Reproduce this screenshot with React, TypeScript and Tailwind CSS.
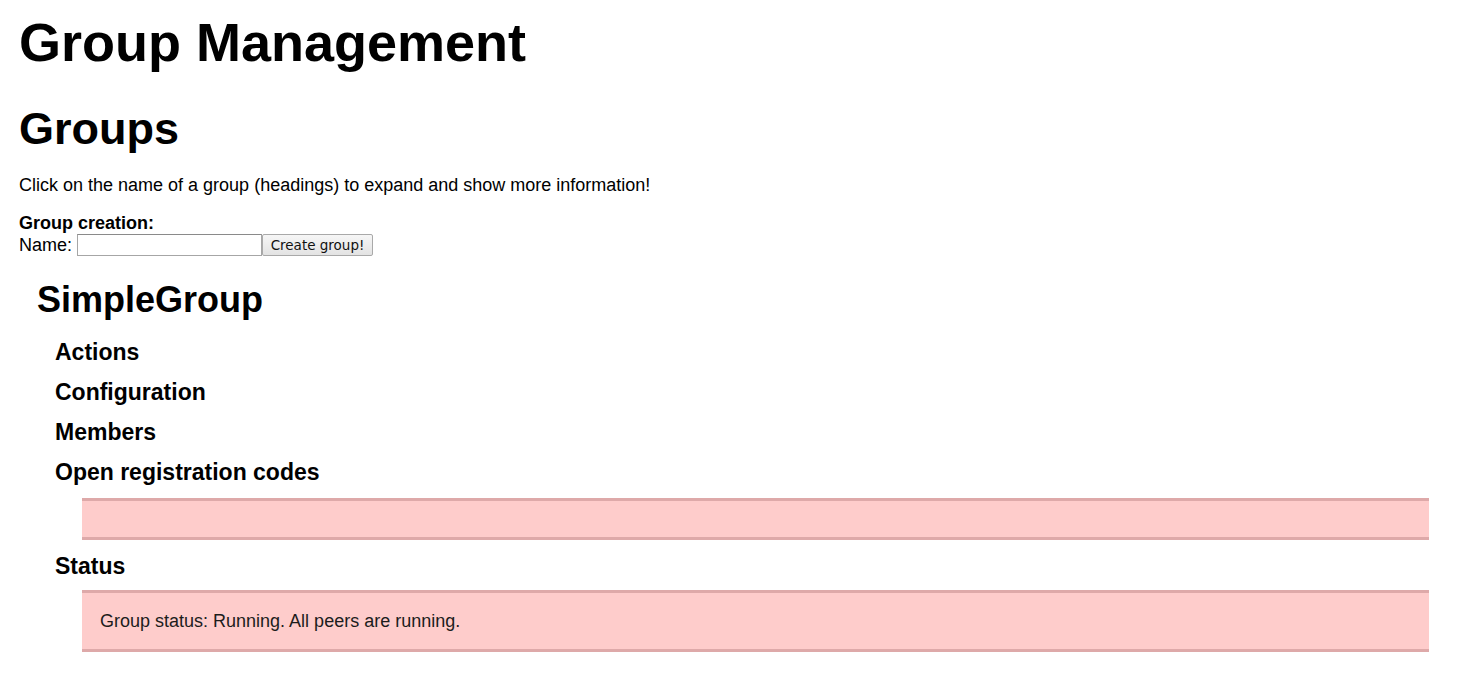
import React, { useState } from 'react';

const Section: React.FC<{ title: string; className?: string; children?: React.ReactNode }> = ({ title, className = '', children }) => (
  <div className={className}>
    <h4 className="pl-[36px] text-[23px] leading-[26px] font-bold cursor-pointer">{title}</h4>
    {children}
  </div>
);

// pink info box
const InfoBox: React.FC<{ className?: string; children?: React.ReactNode }> = ({ className = '', children }) => (
  <div
    className={`ml-[63px] mr-[10px] border-y-[3px] border-[#dea9a9] bg-[#fecccb] pl-[18px] pt-[18px] pb-[17px] min-h-[42px] text-[18px] leading-[21px] text-[#1c1c1c] ${className}`}
  >
    {children}
  </div>
);

export default function App() {
  const [name, setName] = useState('');

  return (
    <div className="px-[19px] pt-[11px] pb-[30px] text-black bg-white" style={{ fontFamily: '"Liberation Sans", Arial, sans-serif' }}>
      <h1 className="text-[54px] leading-[62px] font-bold">Group Management</h1>
      <h2 className="mt-[30px] text-[45px] leading-[51px] font-bold">Groups</h2>
      <p className="mt-[21px] text-[18px] leading-[21px]">
        Click on the name of a group (headings) to expand and show more information!
      </p>

      {/* group creation form */}
      <div className="mt-[17px] text-[18px] leading-[21px]">
        <div className="font-bold leading-[21px]">Group creation:</div>
        <div className="flex items-center h-[22px]">
          <span>Name:</span>
          <input
            value={name}
            onChange={(e) => setName(e.target.value)}
            className="ml-[5px] w-[185px] h-[22px] border border-[#a6a6a6] border-t-[#8a8a8a] bg-white px-[2px] text-[13px] outline-none"
          />
          <button
            className="w-[111px] h-[22px] border border-[#a9a9a9] rounded-[2px] bg-gradient-to-b from-[#f6f6f6] to-[#e3e3e3] text-[13.5px] leading-[20px] text-[#111]"
            style={{ fontFamily: '"DejaVu Sans", sans-serif' }}
          >
            Create group!
          </button>
        </div>
      </div>

      {/* group list */}
      <div className="mt-[23px]">
        <h3 className="pl-[18px] text-[36px] leading-[41px] font-bold cursor-pointer">SimpleGroup</h3>
        <Section title="Actions" className="mt-[19px]" />
        <Section title="Configuration" className="mt-[14px]" />
        <Section title="Members" className="mt-[14px]" />
        <Section title="Open registration codes" className="mt-[14px]">
          <InfoBox className="mt-[13px] h-[42px] !p-0" />
        </Section>
        <Section title="Status" className="mt-[13px]">
          <InfoBox className="mt-[11px]">Group status: Running. All peers are running.</InfoBox>
        </Section>
      </div>
    </div>
  );
}
